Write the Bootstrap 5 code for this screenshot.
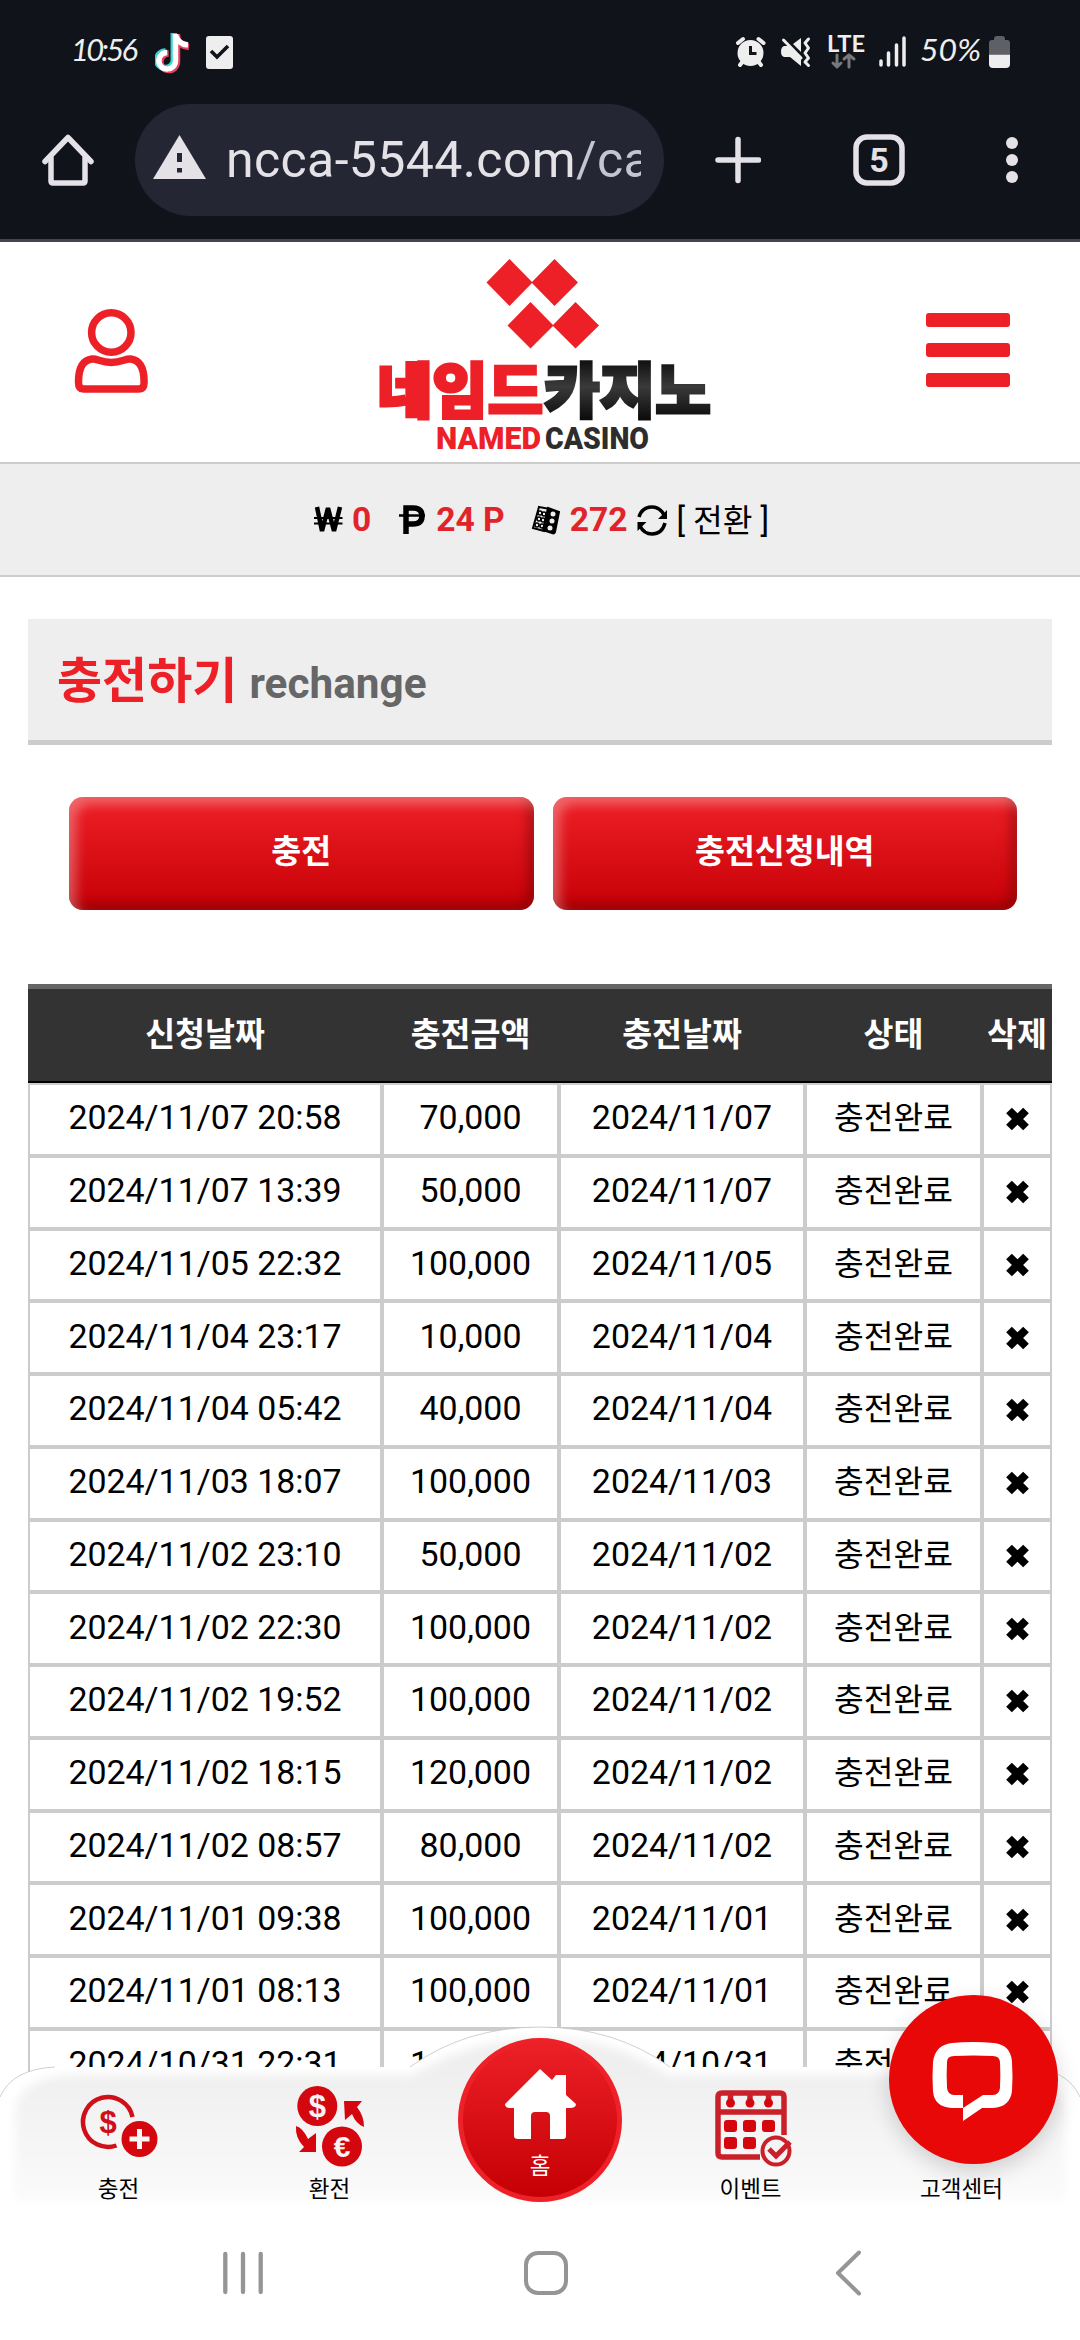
<!DOCTYPE html>
<html lang="ko">
<head>
<meta charset="utf-8">
<meta name="viewport" content="width=device-width, initial-scale=1">
<title>네임드카지노</title>
<link href="https://cdn.jsdelivr.net/npm/bootstrap@5.3.0/dist/css/bootstrap.min.css" rel="stylesheet">
<style>
body{font-family:Roboto,"Noto Sans CJK KR",sans-serif;color:#000;background:#fff}
svg{display:block;flex:none}
.phone{width:1080px;height:2340px}
.chrome{height:242px;background:#10131a;border-bottom:3px solid #43444f}
.status{height:104px;padding:30px 70px 0 70px}
.status .tok{margin-left:15px}
.toolbar{height:112px;padding-left:42px;padding-right:62px}
.omni{width:529px;height:112px;border-radius:56px;background:#242733;padding-left:18px;margin-left:41px}
.url{font-size:50px;color:#e4e1e7;width:415px;margin-left:20px;line-height:114px;letter-spacing:.38px}
.url span{color:#c3c6d2}
.site-head{height:220px;padding:0 70px 0 74px}
.wallet{height:115px;background:#eee;border:solid #ccc;border-width:2px 0;font-size:33.6px;line-height:1;padding-left:2px}
.wallet b{color:#e1242b}
.wallet .swap{font-size:32.3px;margin-left:10px;padding-top:3px}
.page{padding:42px 28px 0}
.title-bar{height:126px;background:#eee;border-bottom:5px solid #ccc;padding:4px 0 0 29px}
.title-bar h1{font-size:49px;font-weight:700;color:#ed2027;margin:0;line-height:1}
.title-bar h1 span{font-size:42.3px;color:#666}
.tabs-row{margin:52px 35px 74px 41px;gap:19px}
.btn-red{height:113px;border:0;border-radius:14px;color:#fff;font-size:32.5px;font-weight:700;padding-bottom:9px;background:linear-gradient(#ee2027,#c60006);box-shadow:inset 7px 7px 12px rgba(255,255,255,.32),inset -6px -6px 12px rgba(80,0,0,.4)}
.btn-red:hover{color:#fff}
.log{width:1024px;table-layout:fixed;border-collapse:separate;border-spacing:0;font-size:33.9px;line-height:40px;text-align:center}
.log th{height:99px;background:#333;border-top:5px solid #666;border-bottom:2px solid #000;color:#fff;padding:0;font-size:32.5px;white-space:nowrap;vertical-align:middle}
.log td{height:72.75px;border:2px solid #ccc;padding:0 0 2px;white-space:nowrap;vertical-align:middle}
.log td.state{font-size:32.3px}
.log svg{margin:2px auto 0}
.dock{height:180px;left:0;right:0;bottom:0}
.dock-bg{position:absolute;left:0;top:0}
.dock-items{position:relative;height:180px;padding:0 13px}
.dock-items a{flex:1;color:#000;text-decoration:none;font-size:22.5px;line-height:30px;padding-top:58px}
.dock-items a span{padding-top:1px}
.dock-items a.home{flex:none;width:164px;height:164px;margin:13px 23px 0;padding-top:25px;border-radius:50%;border:5px solid #ee2028;background:linear-gradient(#ec2027,#c50005);color:#fff}
.chat{position:absolute;left:889px;top:-30px;width:169px;height:169px;border-radius:50%;background:#e90808;box-shadow:0 8px 22px rgba(0,0,0,.16)}
.sysnav{height:135px;padding:0 219px 0 223px}
</style>
<script src="https://cdn.jsdelivr.net/npm/bootstrap@5.3.0/dist/js/bootstrap.bundle.min.js"></script>
</head>
<body>
<div class="phone d-flex flex-column overflow-hidden">

<header class="chrome flex-shrink-0">
  <div class="status d-flex justify-content-between">
    <div class="d-flex">
      <svg width="70" height="45" viewBox="72 30 70 45"><text x="73" y="61" font-family="Lato" font-style="italic" font-size="31" fill="#eee" textLength="67" lengthAdjust="spacing">10:56</text></svg>
      <svg class="tok" width="35" height="45" viewBox="155 30 35 45" fill="none" stroke-width="6.5">
        <g stroke="#35d6d2"><path d="M173.800 33v27a8.300 8.300 0 1 1-8.300-8.500"/><path d="M174 35q2 9 12 10"/></g>
        <g stroke="#e5425f"><path d="M177 34v28a8.300 8.300 0 1 1-8.300-8.500"/><path d="M177 37q2 9 12 10"/></g>
        <g stroke="#fff" stroke-width="5.500"><path d="M175.500 34v27a8.300 8.300 0 1 1-8.300-8.500"/><path d="M176 36q2 8 12 9"/></g>
      </svg>
      <svg class="ms-3" width="27" height="45" viewBox="206 30 27 45"><rect x="206" y="36" width="27" height="33" rx="3" fill="#eee"/><path d="M211 51l6 6 11-11" fill="none" stroke="#10131a" stroke-width="3.600"/></svg>
    </div>
    <svg width="274" height="45" viewBox="736 30 274 45" fill="#eee" stroke="none">
      <circle cx="750.500" cy="53" r="13"/><path d="M738 43l5-4M763.500 43l-5-4M740 65l3-4M761 65l-3-4" stroke="#eee" stroke-width="4" stroke-linecap="round"/><path d="M750.500 46v7.500h6" fill="none" stroke="#10131a" stroke-width="3"/>
      <path d="M801 38v14l-8-8zM784 46h4l13 13v7l-11-9h-6q-3-1-3-5.500t3-5.500z"/><path d="M783.500 40L801 58" stroke="#eee" stroke-width="3" stroke-linecap="round"/><path d="M808.500 39l-3.500 4 3.500 5-3.500 5 3.500 5-3.500 4 3.500 3.500" fill="none" stroke="#eee" stroke-width="3" stroke-linecap="round" stroke-linejoin="round"/>
      <text x="827" y="51.500" font-family="Lato" font-weight="700" font-size="23" textLength="38" lengthAdjust="spacingAndGlyphs">LTE</text>
      <path d="M837 55v12m-4-4l4 4 4-4M849 67V55m-5 4l5-4 5 4" fill="none" stroke="#77787c" stroke-width="3" stroke-linecap="round" stroke-linejoin="round"/>
      <path d="M881 61v4M888.500 53v12M896.500 45v20M904 38v27" stroke="#eee" stroke-width="3.500" stroke-linecap="round"/>
      <text x="920" y="61" font-family="Lato" font-style="italic" font-size="31" textLength="61" lengthAdjust="spacingAndGlyphs">50%</text>
      <path d="M989 54V43q0-3 3-3h2v-1q0-3 3-3h5q3 0 3 3v1h2q3 0 3 3v11z" fill="#5f6066"/><path d="M989 54.500h21V64q0 4-4 4h-13q-4 0-4-4z"/>
    </svg>
  </div>
  <div class="toolbar d-flex align-items-center">
    <svg width="52" height="52" viewBox="42 134 52 52" fill="none" stroke="#e4e1e7" stroke-width="5.500" stroke-linecap="round" stroke-linejoin="round"><path d="M45 161.500L68 137.500l23 24"/><path d="M51 158v23q0 2 2 2h30q2 0 2-2v-23"/></svg>
    <div class="omni d-flex align-items-center overflow-hidden">
      <svg width="53" height="52" viewBox="153 134 53 52"><path d="M179.500 135L206 179h-53z" fill="#e4e1e7"/><path d="M179.500 153v9M179.500 168v4.500" stroke="#242733" stroke-width="5"/></svg>
      <div class="url overflow-hidden text-nowrap">ncca-5544.com<span>/ca</span></div>
    </div>
    <svg style="margin-left:51px" width="46" height="52" viewBox="714 134 46 52"><path d="M737 139.500v41M717 160h40.500" stroke="#e4e1e7" stroke-width="5.500" stroke-linecap="round"/></svg>
    <svg style="margin-left:92px" width="52" height="52" viewBox="852 134 52 52"><rect x="855" y="137" width="46" height="46" rx="11" fill="none" stroke="#e4e1e7" stroke-width="5.500"/><text x="878" y="171.500" text-anchor="middle" font-family="Roboto" font-weight="700" font-size="34" fill="#e4e1e7">5</text></svg>
    <svg class="ms-auto" width="12" height="52" viewBox="1006 134 12 52" fill="#e4e1e7"><circle cx="1012" cy="143" r="6"/><circle cx="1012" cy="160" r="6"/><circle cx="1012" cy="177" r="6"/></svg>
  </div>
</header>

<main class="flex-grow-1 position-relative overflow-hidden">
  <div class="site-head d-flex align-items-center justify-content-between">
    <svg width="75" height="220" viewBox="74 242 75 220" fill="none" stroke="#ed2027" stroke-width="7.500"><circle cx="111.300" cy="332.500" r="19.700"/><path d="M78.500 382c0-17 6-22 13.500-23 5-.7 9 3.500 19.300 3.500s14.300-4.200 19.300-3.500c7.500 1 13.500 6 13.500 23q0 7-5 7h-55.600q-5 0-5-7z"/></svg>
    <svg style="margin-left:14px" width="340" height="220" viewBox="374 242 340 220">
      <defs><linearGradient id="ink" x1="0" y1="0" x2="0" y2="1"><stop offset=".15" stop-color="#090909"/><stop offset=".5" stop-color="#3a3a3a"/><stop offset=".9" stop-color="#090909"/></linearGradient></defs>
      <path fill="#ed2027" d="M508.500 259l23 23.500-23 23.500-23-23.500zM553.500 259l23.500 23.500-23.500 23.500-23-23.500zM529.500 302l23 23.500-23 23-23-23zM574.500 302l23.500 23.500-23.500 23-23-23z"/>
      <g font-family="Noto Sans CJK KR" font-weight="900" font-size="60" stroke-width="3"><text x="376" y="413" fill="#ed2027" stroke="#ed2027" textLength="166" lengthAdjust="spacingAndGlyphs">네임드</text><text x="543" y="413" fill="url(#ink)" stroke="url(#ink)" textLength="167" lengthAdjust="spacingAndGlyphs">카지노</text></g>
      <g font-family="Roboto" font-weight="900" font-size="32"><text x="435" y="449" fill="#ed2027" textLength="105" lengthAdjust="spacingAndGlyphs">NAMED</text><text x="544" y="448.500" fill="#2d2d2d" textLength="104" lengthAdjust="spacingAndGlyphs">CASINO</text></g>
    </svg>
    <svg width="84" height="220" viewBox="925 242 84 220" fill="#ed2027"><rect x="925" y="313" width="84" height="14" rx="3"/><rect x="925" y="343" width="84" height="14" rx="3"/><rect x="925" y="373" width="84" height="14" rx="3"/></svg>
  </div>

  <div class="wallet d-flex align-items-center justify-content-center">
    <svg width="30" height="32" viewBox="313 504 30 32" fill="none" stroke="#000"><path d="M317 507l5 24 6-23 6 23 6-24" stroke-width="4.500" stroke-linejoin="bevel"/><path d="M314 518h28.500M314 523.500h28.500" stroke-width="1.800"/></svg>
    <b style="margin-left:9px">0</b>
    <svg style="margin-left:28px" width="26" height="32" viewBox="399 504 26 32" fill="none" stroke="#000"><path d="M406 534v-26h7q9 0 9 8t-9 8h-7" stroke-width="5.500"/><path d="M399 515.500h26" stroke-width="2.500"/></svg>
    <b style="margin-left:11px">24 P</b>
    <svg style="margin-left:26px" width="29" height="32" viewBox="528 504 29 32" fill="none" stroke="#000" stroke-width="2"><path d="M536 507l11 2-6 22-11-3z"/><path d="M545 508l11 4-4 20q-1 2-3 1l-9-3z" fill="#000"/><g fill="#eee" stroke="none"><circle cx="550" cy="514" r="2.500"/><circle cx="549" cy="521" r="2.500"/><circle cx="547" cy="528" r="2.500"/></g><g stroke-width="1.600"><circle cx="537" cy="513" r="2"/><circle cx="541" cy="514" r="2"/><circle cx="536" cy="519" r="2"/><circle cx="540" cy="520" r="2"/><circle cx="534" cy="525" r="2"/><circle cx="539" cy="526" r="2"/></g></svg>
    <b style="margin-left:10px">272</b>
    <svg style="margin-left:9px" width="30" height="32" viewBox="633 504 30 32" fill="none" stroke="#000" stroke-width="3.500"><path d="M635 517q3-10 13-10 8 0 12 8M661 523q-3 11-13 11-8 0-12-8"/><path d="M663 510v9h-9zM633.500 531v-9h9z" fill="#000" stroke="none"/></svg>
    <span class="swap">[ 전환 ]</span>
  </div>

  <div class="page">
    <div class="title-bar d-flex align-items-center"><h1>충전하기 <span>rechange</span></h1></div>
    <div class="tabs-row d-flex">
      <button class="btn btn-red w-50">충전</button>
      <button class="btn btn-red w-50">충전신청내역</button>
    </div>
    <table class="log">
      <colgroup><col style="width:354px"><col style="width:177px"><col style="width:246px"><col style="width:177px"><col style="width:70px"></colgroup>
      <thead><tr><th>신청날짜</th><th>충전금액</th><th>충전날짜</th><th>상태</th><th>삭제</th></tr></thead>
      <tbody id="rows"></tbody>
    </table>
  </div>

  <nav class="dock position-absolute">
    <svg class="dock-bg" width="1080" height="180" viewBox="0 2025 1080 180">
      <defs><linearGradient id="shade" x1="0" y1="2070" x2="0" y2="2205" gradientUnits="userSpaceOnUse"><stop offset="0" stop-color="#efefef"/><stop offset="1" stop-color="#fbfbfb"/></linearGradient><filter id="soft" x="-5%" y="-10%" width="110%" height="120%"><feGaussianBlur stdDeviation="5"/></filter></defs>
      <path d="M0 2205V2097Q12 2069 55 2067H410Q465 2027 540 2027T670 2067H1025Q1068 2069 1080 2097V2205z" fill="#fff"/>
      <path d="M0 2097Q12 2069 55 2067M410 2067Q465 2027 540 2027T670 2067M1025 2067Q1068 2069 1080 2097" fill="none" stroke="#c4c4bc" stroke-width=".8"/>
      <path d="M15 2200V2110Q20 2078 70 2075H412Q470 2040 540 2038T668 2075H1010Q1060 2078 1065 2110V2200z" fill="url(#shade)" filter="url(#soft)"/>
    </svg>
    <div class="dock-items d-flex">
      <a class="d-flex flex-column align-items-center" href="#">
        <svg width="80" height="90" viewBox="79 2083 80 90" fill="none" stroke="#cf1019"><path d="M132.500 2117a25 25 0 1 0-16 28.500" stroke-width="4.500"/><text x="108" y="2133" text-anchor="middle" font-family="Liberation Sans" font-weight="700" font-size="31" fill="#cf1019" stroke="none">$</text><circle cx="139.500" cy="2139" r="18" fill="#d4070f" stroke="none"/><path d="M139.500 2129v20M129.500 2139h20" stroke="#f7f7f7" stroke-width="5"/></svg>
        <span>충전</span></a>
      <a class="d-flex flex-column align-items-center" href="#">
        <svg width="70" height="90" viewBox="295 2083 70 90" fill="#d4070f" font-family="Liberation Sans" font-weight="700" text-anchor="middle"><circle cx="317.300" cy="2106" r="20"/><text x="317.300" y="2117" font-size="31" fill="#f4f4f4">$</text><circle cx="342" cy="2146.500" r="20"/><text x="342" y="2157" font-size="30" fill="#f4f4f4">€</text><path d="M344 2101h18l-5 6q7 9 7 20-8-3-12-13l-7 6zM316 2152h-17l5-5q-9-9-8-21 7 2 12 13l8-6z"/></svg>
        <span>환전</span></a>
      <a class="home d-flex flex-column align-items-center" href="#">
        <svg width="72" height="74" viewBox="505 2068 72 74" fill="#fff"><path d="M541 2069l12 11 4-5h10v20l10 9q0 4-6 4h-4v28q0 3-3 3h-13v-23q0-4-4-4h-11q-4 0-4 4v23h-13q-4 0-4-3v-28h-4q-5 0-5-4z"/></svg>
        <span style="margin-top:8px">홈</span></a>
      <a class="d-flex flex-column align-items-center" href="#">
        <svg style="margin-left:6px" width="80" height="90" viewBox="714 2083 80 90" fill="none" stroke="#c9202a" stroke-width="5.500"><path d="M760 2157h-38q-4 0-4-4v-56q0-4 4-4h58q4 0 4 4v38M718 2112h66"/><path d="M730.500 2092v11M750 2092v11M768.500 2092v11"/><g fill="#d4070f" stroke="none"><circle cx="730.500" cy="2103" r="4.500"/><circle cx="750" cy="2103" r="4.500"/><circle cx="768.500" cy="2103" r="4.500"/><rect x="724" y="2120" width="13" height="12" rx="3"/><rect x="743" y="2120" width="13" height="12" rx="3"/><rect x="762" y="2120" width="13" height="12" rx="3"/><rect x="724" y="2137" width="13" height="12" rx="3"/><rect x="743" y="2137" width="13" height="12" rx="3"/></g><circle cx="776" cy="2151" r="13.500" fill="#f4f4f4" stroke-width="4"/><path d="M769 2149l7 7 14-14" stroke-width="5"/></svg>
        <span>이벤트</span></a>
      <a class="d-flex flex-column align-items-center" href="#"><span style="margin-top:90px">고객센터</span></a>
    </div>
    <div class="chat"><svg width="169" height="169" viewBox="889 1995 169 169" fill="#fff" fill-rule="evenodd"><path d="M952 2043q21-2 42 0 17 2 18 19 1 15 0 29-2 16-19 17h-11l-19 13v-13h-11q-18-1-19-17-1-14 0-29 2-17 19-19zM954 2056q-7 0-7 6-.7 13 0 26 1 7 7 7h9v13l20-13h10q6 0 7-7 .7-13 0-26-.5-6-7-6-19.500-1-39 0z"/></svg></div>
  </nav>
</main>

<footer class="sysnav d-flex flex-shrink-0 align-items-center justify-content-between">
  <svg width="40" height="46" viewBox="223 2250 40 46" stroke="#959595" stroke-width="4.300" stroke-linecap="round"><path d="M225.300 2254v38M243 2254v38M260.700 2254v38"/></svg>
  <svg style="margin-left:-8px" width="44" height="46" viewBox="523 2250 44 46"><rect x="525" y="2253" width="40" height="40" rx="12" fill="none" stroke="#959595" stroke-width="4"/></svg>
  <svg width="25" height="46" viewBox="836 2250 25 46"><path d="M859 2252.500L838 2273l21 20.500" fill="none" stroke="#959595" stroke-width="4" stroke-linecap="round" stroke-linejoin="round"/></svg>
</footer>
</div>
<script>
const entries = [
  ["2024/11/07 20:58","70,000"],["2024/11/07 13:39","50,000"],["2024/11/05 22:32","100,000"],
  ["2024/11/04 23:17","10,000"],["2024/11/04 05:42","40,000"],["2024/11/03 18:07","100,000"],
  ["2024/11/02 23:10","50,000"],["2024/11/02 22:30","100,000"],["2024/11/02 19:52","100,000"],
  ["2024/11/02 18:15","120,000"],["2024/11/02 08:57","80,000"],["2024/11/01 09:38","100,000"],
  ["2024/11/01 08:13","100,000"],["2024/10/31 22:31","100,000"]
];
const cross = '<svg width="25" height="24" viewBox="0 0 25 24"><path d="M4 3.500l17 17M21 3.500L4 20.500" stroke="#000" stroke-width="8"/></svg>';
document.getElementById("rows").innerHTML = entries.map(([when, sum]) =>
  `<tr><td>${when}</td><td>${sum}</td><td>${when.slice(0, 10)}</td><td class="state">충전완료</td><td>${cross}</td></tr>`).join("");
</script>
</body>
</html>
